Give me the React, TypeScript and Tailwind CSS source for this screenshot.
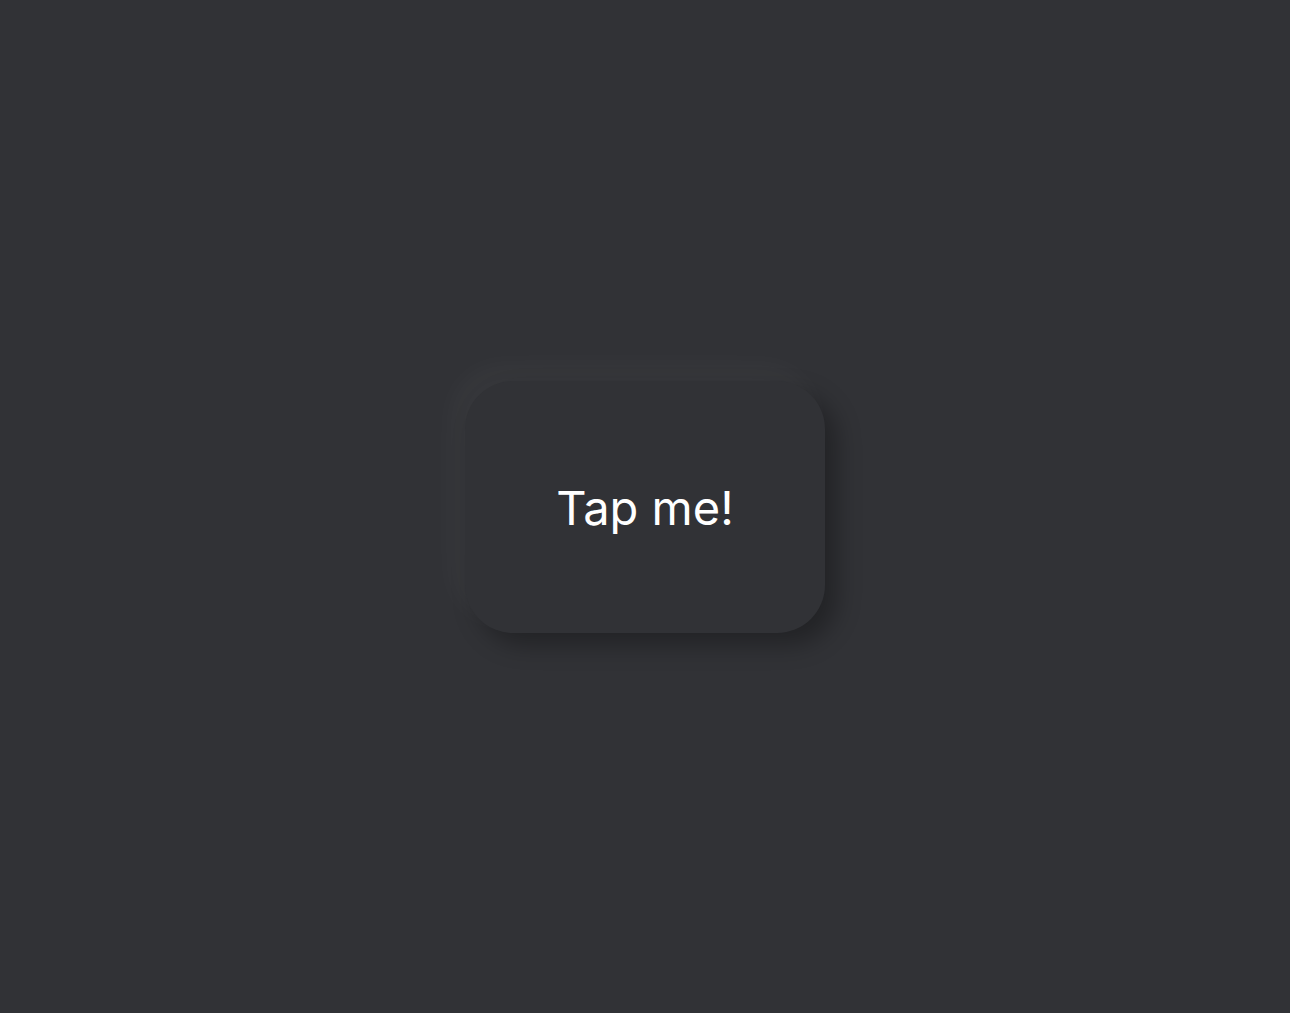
export default function App() {
  return (
    <div className="min-h-screen w-full bg-[#313236] flex items-center justify-center">
      <button
        className="w-[360px] h-[252px] pt-[4px] rounded-[48px] bg-[#313236] text-white text-[47px] font-[Inter,sans-serif] shadow-[-12px_-14px_30px_rgba(255,255,255,0.035),12px_12px_24px_rgba(0,0,0,0.3)]"
      >
        Tap me!
      </button>
    </div>
  );
}
